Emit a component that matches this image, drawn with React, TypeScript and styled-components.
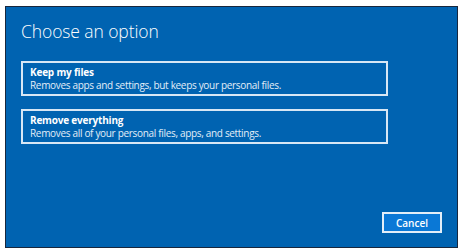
import React from "react";
import styled, { createGlobalStyle } from "styled-components";

const Global = createGlobalStyle`
  html, body { margin: 0; padding: 0; background: #ffffff; }
  body { font-family: "Open Sans", "Noto Sans", sans-serif; }
`;

const Frame = styled.div`
  box-sizing: border-box;
  margin: 6px 4px 0 5px;
  width: 453px;
  height: 242px;
  border: 1px solid #18273d;
  background: #0063b1;
  display: flex;
  flex-direction: column;
  padding: 12px 15px 0 15px;
  color: #ffffff;
`;

const Title = styled.h1`
  margin: 0;
  font-weight: 300;
  font-size: 17.5px;
  line-height: 24px;
  letter-spacing: -0.1px;
`;

const Options = styled.div`
  display: flex;
  flex-direction: column;
  gap: 13px;
  margin-top: 18px;
`;

const Option = styled.button`
  box-sizing: border-box;
  width: 367px;
  height: 35px;
  border: 2px solid #d7e7f5;
  background: transparent;
  color: #ffffff;
  text-align: left;
  padding: 3px 0 0 7px;
  display: flex;
  flex-direction: column;
  font-family: inherit;
  cursor: pointer;
`;

const OptionTitle = styled.span`
  display: block;
  font-weight: 700;
  font-size: 10px;
  line-height: 13px;
  letter-spacing: -0.2px;
`;

const OptionDesc = styled.span`
  display: block;
  font-size: 10px;
  line-height: 13px;
  letter-spacing: -0.32px;
  color: #e3eef8;
`;

const Footer = styled.div`
  margin-top: auto;
  display: flex;
  justify-content: flex-end;
  padding: 0 0 14px 0;
`;

const CancelButton = styled.button`
  box-sizing: border-box;
  width: 60px;
  height: 21px;
  border: 2px solid #e3eef8;
  background: #0a78d6;
  color: #ffffff;
  font-family: inherit;
  font-size: 10px;
  font-weight: 600;
  cursor: pointer;
`;

export default function App() {
  return (
    <>
      <Global />
      <Frame>
        <Title>Choose an option</Title>
        <Options>
          <Option>
            <OptionTitle>Keep my files</OptionTitle>
            <OptionDesc>Removes apps and settings, but keeps your personal files.</OptionDesc>
          </Option>
          <Option>
            <OptionTitle>Remove everything</OptionTitle>
            <OptionDesc>Removes all of your personal files, apps, and settings.</OptionDesc>
          </Option>
        </Options>
        <Footer>
          <CancelButton>Cancel</CancelButton>
        </Footer>
      </Frame>
    </>
  );
}
